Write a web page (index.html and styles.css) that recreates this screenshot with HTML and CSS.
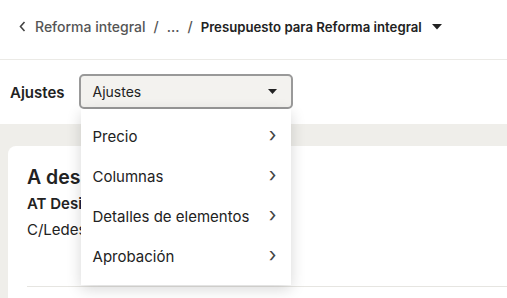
FILE: index.html
```html
<!DOCTYPE html>
<html lang="es">
<head>
  <meta charset="UTF-8">
  <meta name="viewport" content="width=device-width, initial-scale=1.0">
  <title>Presupuesto para Reforma integral</title>
  <link rel="stylesheet" href="styles.css">
</head>
<body>
  <header class="topbar">
    <nav class="crumbs">
      <svg class="back" width="7" height="11" viewBox="0 0 7 11"><path d="M5.5 1L1.5 5.5L5.5 10" fill="none" stroke="#444" stroke-width="1.6"/></svg>
      <a class="crumb">Reforma integral</a>
      <span class="sep">/</span>
      <span class="crumb">...</span>
      <span class="sep">/</span>
      <span class="current">Presupuesto para Reforma integral</span>
      <svg class="caret" width="10" height="6" viewBox="0 0 10 6"><path d="M0 0H10L5 5.5Z" fill="#222"/></svg>
    </nav>
  </header>

  <div class="toolbar">
    <span class="label">Ajustes</span>
    <div class="select-wrap">
      <div class="select">
        <span>Ajustes</span>
        <svg width="9" height="5" viewBox="0 0 9 5"><path d="M0 0H9L4.5 5Z" fill="#222"/></svg>
      </div>
      <ul class="menu">
        <li>Precio <span class="chev">›</span></li>
        <li>Columnas <span class="chev">›</span></li>
        <li>Detalles de elementos <span class="chev">›</span></li>
        <li>Aprobación <span class="chev">›</span></li>
      </ul>
    </div>
  </div>

  <main class="content">
    <section class="card">
      <h2>A design studio</h2>
      <p class="company">AT Design Studio</p>
      <p class="address">C/Ledesma 12</p>
      <hr>
    </section>
  </main>
</body>
</html>
```

FILE: styles.css
```css
body {
  margin: 0;
  font-family: Inter, "Noto Sans", sans-serif;
  color: #222;
  background-color: #fff;
  overflow: hidden;
  height: 298px;
}

.topbar {
  height: 60px;
  border-bottom: 1px solid #ebeae6;
  display: flex;
  align-items: center;
  padding-left: 19px;
  padding-bottom: 6px;
  box-sizing: border-box;
}

.crumbs {
  display: flex;
  align-items: center;
  font-size: 14px;
  font-weight: 500;
  color: #555;
}

.back {
  margin-right: 9px;
}

.sep {
  margin: 0 8px;
}

.current {
  color: #222;
  font-weight: 600;
  font-size: 13.2px;
}

.caret {
  margin-left: 10px;
}

.toolbar {
  height: 64px;
  display: flex;
  align-items: center;
  padding-left: 10px;
  gap: 14px;
}

.label {
  font-size: 15px;
  font-weight: 600;
}

.select-wrap {
  position: relative;
}

.select {
  width: 214px;
  height: 35px;
  box-sizing: border-box;
  border: 2px solid #999;
  border-radius: 5px;
  background-color: #f3f2ef;
  display: flex;
  align-items: center;
  justify-content: space-between;
  padding: 0 14px 0 12px;
  font-size: 14px;
  margin-top: -2px;
}

.menu {
  position: absolute;
  top: 33px;
  left: 2px;
  width: 210px;
  margin: 0;
  padding: 8px 0 8px;
  list-style: none;
  background-color: #fff;
  box-shadow: 0 4px 14px rgba(0, 0, 0, 0.16);
  z-index: 5;
}

.menu li {
  height: 40px;
  display: flex;
  align-items: center;
  justify-content: space-between;
  padding: 0 14px 0 12px;
  font-size: 15px;
}

.chev {
  font-size: 20px;
  color: #444;
  margin-top: -3px;
}

.content {
  background-color: #efeeea;
  padding: 22px 0 0 8px;
  height: 174px;
  box-sizing: border-box;
}

.card {
  background-color: #fff;
  border-radius: 8px 0 0 0;
  padding: 19px 0 0 19px;
  height: 152px;
  box-sizing: border-box;
}

.card h2 {
  font-size: 19.5px;
  font-weight: 600;
  margin: 0 0 5px;
}

.card p {
  margin: 0;
  font-size: 15px;
}

.company {
  font-weight: 600;
  margin-bottom: 7px !important;
}

.card hr {
  border: 0;
  border-top: 1px solid #e6e5e1;
  margin: 47px 0 0;
}
```
